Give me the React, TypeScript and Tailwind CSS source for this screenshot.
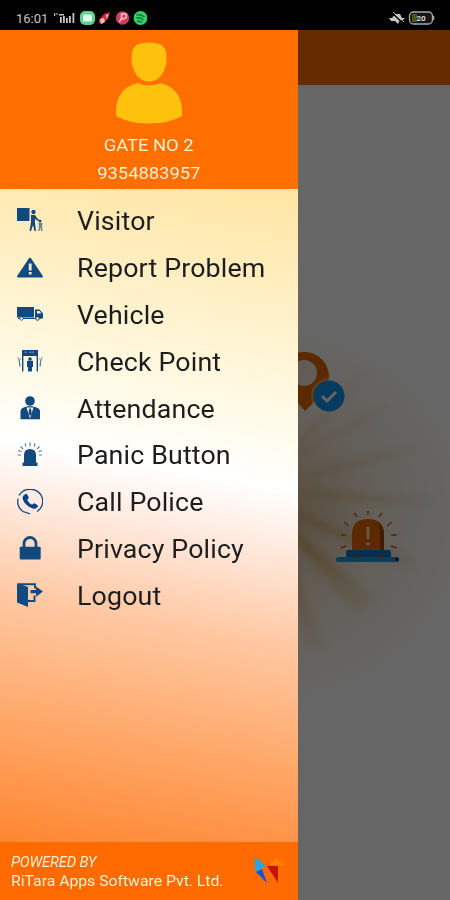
import React from "react";

const navy = "#124a80";

const VisitorIcon = () => (
  <svg viewBox="0 0 26 26" className="size-[26px]" fill={navy}>
    <path d="M0 0h12.5v13H0z" />
    <circle cx="16.5" cy="4" r="2.200" />
    <path d="M14 7h4l2 3 2 2-1 1-3-2v4l1 8h-1.500l-1.500-6-2 6h-1.500l1.500-9z" />
    <circle cx="23" cy="13" r="1.500" />
    <path d="M21.500 15h4l-.5 4 .5 4h-1.500l-.5-4-1 4h-1.500l1-4z" opacity=".65" />
  </svg>
);

const WarningIcon = () => (
  <svg viewBox="0 0 26 26" className="size-[26px]">
    <path
      d="M13 3.500 25 21.500H1z"
      fill={navy}
      stroke={navy}
      strokeWidth="2"
      strokeLinejoin="round"
    />
    <path d="M11.800 8.500h2.800v7h-2.800zM11.800 17h2.800v2.500h-2.800z" fill="#f5eccd" />
  </svg>
);

const TruckIcon = () => (
  <svg viewBox="0 0 26 26" className="size-[26px]">
    <path d="M0 5h17v10.500H0zM18 7.500h4.500l3.500 4v5h-8z" fill={navy} />
    <path d="M20 9h2.500l1.800 2.500H20z" fill="#fff3cc" />
    <path d="M1 16.500h23" stroke={navy} strokeWidth="1" />
    <circle cx="4.500" cy="16.500" r="1.700" fill="#fff3cc" stroke={navy} strokeWidth=".8" />
    <circle cx="20.500" cy="16.500" r="1.800" fill="#fff3cc" stroke={navy} strokeWidth="1" />
  </svg>
);

const CheckPointIcon = () => (
  <svg viewBox="0 0 26 26" className="size-[26px]">
    <path d="M5 1h16v6H5z" fill={navy} />
    <path d="M7.500 3.200h2.500M12 3.200h5" stroke="#8fa9c0" strokeWidth=".8" />
    <path d="M5.700 6.500v16M20.300 6.500v16" stroke={navy} strokeWidth="1.400" />
    <circle cx="13" cy="10" r="1.800" fill={navy} />
    <path d="M10 11.700h6V18h-1v4.500h-4V18h-1z" fill={navy} />
    <path
      d="M3.300 9q-2 3.500 0 8M.8 8q2 4 2 10M22.700 9q2 3.500 0 8M25.200 8q-2 4-2 10"
      stroke={navy}
      strokeWidth=".9"
      fill="none"
      opacity=".6"
    />
  </svg>
);

const AttendanceIcon = () => (
  <svg viewBox="0 0 26 26" className="size-[26px]">
    <circle cx="13" cy="5" r="4.800" fill={navy} />
    <path d="M3.500 23.200V15.500q0-3 3-4l4-1.200h5l4 1.200q3.500 1 3.500 4v7.700z" fill={navy} />
    <path d="m9.500 11.500 3.500 11 3.500-11z" fill="#f3f1e8" />
    <path d="M12.200 12.500h1.800l.7 5-1.600 2.500-1.500-2.500z" fill={navy} />
  </svg>
);

const SirenIcon = () => (
  <svg viewBox="0 0 26 26" className="size-[26px]">
    <path d="M7 20.500V13q0-6 6-6t6 6v7.500h1.500V24h-15v-3.500z" fill={navy} />
    <path
      d="M13 .5V4M8 1.500l1 3M18 1.500l-1 3M3.500 4.500 6 7M22.500 4.500 20 7M1 8.500l3.500 1.200M25 8.500l-3.500 1.200M1 13h3M22 13h3"
      stroke={navy}
      strokeWidth="1.200"
      opacity=".7"
    />
  </svg>
);

const PhoneIcon = () => (
  <svg viewBox="0 0 26 26" className="size-[26px]">
    <path
      d="M2 6.500Q5.500.3 13 .3A12 12 0 0 1 20 22.500M1 9.500Q-.5 18 6 22.500l7 2.300"
      fill="none"
      stroke={navy}
      strokeWidth="1.300"
    />
    <path
      d="m6.500 6.500 2-1.500q1-.5 1.700.5l1.400 2.600q.5 1-.5 1.800l-1 .8q1.500 3.400 5 5l1-1q.8-.8 1.700-.3l2.800 1.800q.8.700.2 1.500l-1.600 1.600q-1.500 1-4.200-.1Q8.500 16.500 6 11q-1.200-3 .5-4.500z"
      fill="#07418a"
    />
  </svg>
);

const LockIcon = () => (
  <svg viewBox="0 0 26 26" className="size-[26px]">
    <path d="M7 12.500V7.500a6 6 0 0 1 12 0v5" fill="none" stroke={navy} strokeWidth="2.800" />
    <rect x="2.700" y="10.800" width="21" height="12.700" rx="1" fill={navy} />
  </svg>
);

const LogoutIcon = () => (
  <svg viewBox="0 0 26 26" className="size-[26px]">
    <path d="M0 .5h1L11 4v20L0 19.500z" fill={navy} />
    <path
      d="M1 1.300h17V5.500M17.500 12.500V18H11"
      fill="none"
      stroke={navy}
      strokeWidth="1.900"
    />
    <path d="M13.500 7h5.500V3.500l7 5-7 5.200v-3.500h-5.500z" fill={navy} />
  </svg>
);

const menu = [
  { label: "Visitor", icon: VisitorIcon },
  { label: "Report Problem", icon: WarningIcon },
  { label: "Vehicle", icon: TruckIcon },
  { label: "Check Point", icon: CheckPointIcon },
  { label: "Attendance", icon: AttendanceIcon },
  { label: "Panic Button", icon: SirenIcon },
  { label: "Call Police", icon: PhoneIcon },
  { label: "Privacy Policy", icon: LockIcon },
  { label: "Logout", icon: LogoutIcon },
];

const StatusBar = () => (
  <header className="flex h-[30px] items-center bg-black pt-[6px] pl-4 pr-[15px] text-[#c4c4c4]">
    <span className="w-[33px] text-[13px] leading-none">16:01</span>
    <svg viewBox="0 0 22 14" className="ml-[5px] h-[14px] w-[22px]" fill="#c4c4c4">
      <path d="M0 2h1.200v3H0zM2.500 2h1v2h-1zM5 3h5v1.500H5zM6 6h1.800v6H6zM9 5h1.800v7H9zM12 7h1.800v5H12zM15 5h1.800v7H15zM18.500 2h1.800v10h-1.800z" />
    </svg>
    <svg viewBox="0 0 70 16" className="ml-[3px] h-4 w-[70px]">
      <rect x="1" y="1" width="15" height="14" rx="5" fill="#60cf93" />
      <rect x="4" y="4.500" width="9" height="7" rx="1" fill="#d9ffe9" />
      <path d="M20 10 25 4l6-2-2 7-6 5-3-1z" fill="#c92b46" />
      <path d="m21 9 4-1 1 4-4 2zM27 4l2.500 1-2 4z" fill="#f2c6a0" />
      <circle cx="43.500" cy="8" r="6.700" fill="#cf3c5c" />
      <path d="M40.500 12q3-4 2-8 5-1 5 2t-5 3" fill="none" stroke="#ffc5ce" strokeWidth="1.500" />
      <circle cx="61.500" cy="8" r="6.900" fill="#36cf68" />
      <path d="M57.500 5q4-1 8 2M57.500 8q4-1 7 2M58 11l5 1" fill="none" stroke="#167b39" strokeWidth="1.300" />
    </svg>
    <svg viewBox="0 0 46 16" className="ml-auto h-4 w-[46px]">
      <path d="M0 8h3l3-4h5l2 4h3l-2 2h-3l-2 4-3-3H2z" fill="#c4c4c4" />
      <path d="m2 2 13 12" stroke="#000" strokeWidth="1.500" />
      <path d="m4 2 11 10" stroke="#c4c4c4" strokeWidth="1" />
      <rect x="20.500" y="2" width="23" height="12" rx="4" fill="#161616" stroke="#a8a8a8" strokeWidth="1.300" />
      <path d="M23 4h5v8h-5z" fill="#505511" />
      <path d="M44.500 6v4" stroke="#a8a8a8" strokeWidth="1.500" />
      <text x="32" y="11" fontSize="8" fontWeight="700" textAnchor="middle" fill="#ddd">
        20
      </text>
    </svg>
  </header>
);

const ProfileHeader = () => (
  <div className="flex h-[159px] flex-col items-center bg-[#ff6f00] pt-3 text-[#fff0d0]">
    <svg viewBox="0 0 68 82" className="h-[82px] w-[68px]" fill="#ffc20c">
      <path d="M34 .5c13 0 17.500 4.500 17.500 15.500 0 13-7 23.500-17.500 23.500S16.500 29 16.500 16C16.500 5 21 .5 34 .5z" />
      <path d="M23 41q11 5 22 0 21 5 22 27v6q-13 7.500-33 7.500T1 74v-6q1-22 22-27z" />
    </svg>
    <span className="mt-[9px] scale-x-[1.08] text-[17px] leading-6">GATE NO 2</span>
    <span className="mt-1 scale-x-[1.08] text-[17px] leading-6">9354883957</span>
  </div>
);

const DrawerFooter = () => (
  <div className="flex h-[58px] items-center justify-between bg-[#ff6b00] pl-[11px] pr-[13px] text-[#fff0d0]">
    <div className="pt-[2px]">
      <p className="origin-left scale-x-[1.06] text-[14px] leading-[19px] italic tracking-[-0.2px]">
        POWERED BY
      </p>
      <p className="origin-left scale-x-[1.05] text-[15px] leading-[19px] whitespace-nowrap">
        RiTara Apps Software Pvt. Ltd.
      </p>
    </div>
    <svg viewBox="0 0 32 30" className="h-[30px] w-8">
      <path d="m2 1 11 9-11 6z" fill="#20a8e8" />
      <path d="m3 16 6-3 5 14z" fill="#1450dc" />
      <path d="m14 10 11-.5V27z" fill="#c51410" />
      <path d="m16 9 7-7 9 7-8 1z" fill="#ff8000" />
    </svg>
  </div>
);

const Drawer = () => (
  <aside className="flex w-[298px] shrink-0 flex-col">
    <ProfileHeader />
    <nav className="flex-1 bg-[linear-gradient(190deg,#ffe5a2_0%,#fff0c8_18%,#fffae6_32%,#ffffff_43%,#ffe8dc_52%,#ffc8a2_65%,#ffa86a_82%,#ff8630_100%)] pt-[8.500px]">
      {menu.map(({ label, icon: Icon }) => (
        <a key={label} className="flex h-[46.9px] items-center pl-[17px] text-[#1d1d1d]">
          <Icon />
          <span className="ml-[34px] origin-left scale-x-[1.07] pt-px text-[25px] leading-none tracking-[0.15px] whitespace-nowrap">
            {label}
          </span>
        </a>
      ))}
    </nav>
    <DrawerFooter />
  </aside>
);

// dashboard art, drawn under the scrim
const Dashboard = () => (
  <main className="relative flex flex-1 flex-col overflow-hidden bg-white">
    <div className="h-[55px] bg-[#ff6f00]" />
    <svg viewBox="298 85 152 815" className="h-[815px] w-[152px]">
      <defs>
        <radialGradient id="glow" gradientUnits="userSpaceOnUse" cx="280" cy="515" r="190">
          <stop offset="0" stopColor="#b07020" stopOpacity=".8" />
          <stop offset=".5" stopColor="#d9a860" stopOpacity=".35" />
          <stop offset="1" stopColor="#e8c898" stopOpacity="0" />
        </radialGradient>
        <filter id="soft" x="-20%" y="-20%" width="140%" height="140%">
          <feGaussianBlur stdDeviation="3.500" />
        </filter>
      </defs>
      <circle cx="280" cy="515" r="190" fill="url(#glow)" opacity=".65" />
      <g fill="url(#glow)" filter="url(#soft)" opacity=".8">
        <path d="M285 460 360 365l12 10z" />
        <path d="m280 465 100-60 10 4z" />
        <path d="m280 482 140-40v10z" />
        <path d="m280 492 150 4v12z" />
        <path d="m280 508 140 50-10 14z" />
        <path d="m280 520 100 80-25 14z" />
        <path d="m280 540 50 110-25 0z" />
      </g>
      <path d="M305 352a24.500 24.500 0 0 1 24 24q0 13-12 23l-12 12-18-20v-38z" fill="#e86700" />
      <circle cx="304" cy="373" r="13" fill="#f4e6da" />
      <circle cx="329" cy="396" r="18" fill="#fff" opacity=".3" />
      <circle cx="329" cy="396" r="15.500" fill="#1295e8" />
      <path d="m322 396 5 5 9-9" fill="none" stroke="#fff" strokeWidth="3" />
      <path d="M352 552v-18q0-15 16-15t16 15v18z" fill="#e8650c" />
      <path d="M377 522q7 4 7 12v18h-4v-18q0-8-3-12z" fill="#a84508" />
      <path d="M368 527v12" stroke="#ffe0a0" strokeWidth="3" />
      <circle cx="368" cy="544" r="1.800" fill="#ffe0a0" />
      <rect x="346" y="550" width="45" height="9" rx="2" fill="#1278c8" />
      <rect x="336" y="557" width="63" height="5" rx="2" fill="#2498dd" />
      <circle cx="397" cy="559.500" r="2" fill="#123c60" />
      <circle cx="358" cy="556" r="2" fill="#a35020" />
      <circle cx="381" cy="556" r="2" fill="#a35020" />
      <path
        d="M368 511v4M354 513l3 4M382 513l-3 4M344 522l5 4M392 522l-5 4M341 535h5M391 535h6M341 548l5-2M391 546l6 2"
        stroke="#c8652a"
        strokeWidth="1.500"
      />
    </svg>
    <div className="absolute inset-0 bg-black/60" />
  </main>
);

const App = () => {
  return (
    <div className="flex h-[900px] w-[450px] flex-col overflow-hidden font-[Roboto,sans-serif]">
      <StatusBar />
      <div className="flex flex-1">
        <Drawer />
        <Dashboard />
      </div>
    </div>
  );
};

export default App;
